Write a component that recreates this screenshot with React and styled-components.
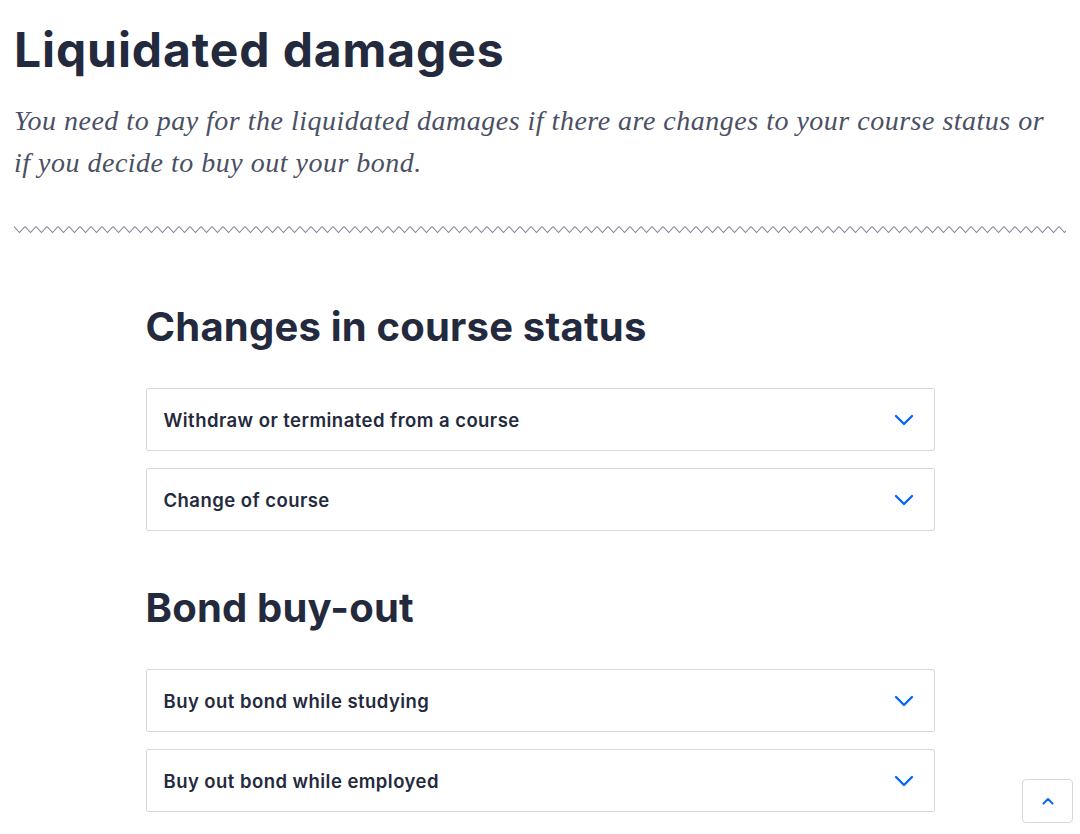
import React from 'react'
import styled, { createGlobalStyle } from 'styled-components'

const colors = {
  heading: '#242a3d',
  lead: '#4b5064',
  border: '#d7d8de',
  zigzag: '#7d8194',
  blue: '#0a66f5',
}

const sections = [
  {
    id: 'course',
    title: 'Changes in course status',
    items: ['Withdraw or terminated from a course', 'Change of course'],
  },
  {
    id: 'bond',
    title: 'Bond buy-out',
    items: ['Buy out bond while studying', 'Buy out bond while employed'],
  },
]

const GlobalStyle = createGlobalStyle`
  html, body {
    margin: 0;
    padding: 0;
    background: #ffffff;
  }
  body {
    font-family: Inter, "Noto Sans", sans-serif;
    color: ${colors.heading};
  }
  * { box-sizing: border-box; }
`

function Chevron() {
  return (
    <svg width="20" height="12" viewBox="0 0 20 12" fill="none">
      <path
        d="M2 2 L10 10 L18 2"
        stroke={colors.blue}
        strokeWidth="2.4"
        strokeLinecap="round"
        strokeLinejoin="round"
      />
    </svg>
  )
}

function App() {
  return (
    <>
      <GlobalStyle />
      <Page>
        <Header>
          <PageTitle>Liquidated damages</PageTitle>
          <Lead>
            You need to pay for the liquidated damages if there are changes to your course status or
            if you decide to buy out your bond.
          </Lead>
        </Header>
        <Zigzag>
          <svg width="100%" height="10">
            <defs>
              <pattern id="zz" width="11" height="10" patternUnits="userSpaceOnUse">
                <path d="M0 1.5 L5.5 7.5 L11 1.5" fill="none" stroke={colors.zigzag} strokeWidth="1.1" />
              </pattern>
            </defs>
            <rect width="100%" height="10" fill="url(#zz)" />
          </svg>
        </Zigzag>
        <Content>
          {sections.map((section) => (
            <Section key={section.id}>
              <SectionTitle>{section.title}</SectionTitle>
              <AccordionList>
                {section.items.map((item) => (
                  <AccordionItem key={item}>
                    <AccordionLabel>{item}</AccordionLabel>
                    <Chevron />
                  </AccordionItem>
                ))}
              </AccordionList>
            </Section>
          ))}
        </Content>
      </Page>
      <BackToTop aria-label="Back to top">
        <svg width="12" height="8" viewBox="0 0 12 8" fill="none">
          <path d="M1.5 6.5 L6 2 L10.5 6.5" stroke={colors.blue} strokeWidth="2" strokeLinecap="round" strokeLinejoin="round" />
        </svg>
      </BackToTop>
    </>
  )
}

export default App

const Page = styled.div`
  padding: 0 14px 40px;
`

const Header = styled.header`
  padding-top: 21px;
`

const PageTitle = styled.h1`
  margin: 0;
  font-size: 48px;
  line-height: 58px;
  font-weight: 700;
  letter-spacing: 0.9px;
  color: ${colors.heading};
`

const Lead = styled.p`
  margin: 21px 0 0;
  font-family: "Liberation Serif", "DejaVu Serif", serif;
  font-style: italic;
  font-size: 28px;
  line-height: 42px;
  letter-spacing: 0.5px;
  color: ${colors.lead};
`

const Zigzag = styled.div`
  margin-top: 41px;
  height: 10px;
  svg { display: block; }
`

const Content = styled.main`
  width: 789px;
  margin: 0 auto;
  padding-top: 68px;
  display: flex;
  flex-direction: column;
  gap: 53px;
`

const Section = styled.section`
  display: flex;
  flex-direction: column;
  gap: 37px;
`

const SectionTitle = styled.h2`
  margin: 0;
  font-size: 40px;
  line-height: 48px;
  font-weight: 700;
  letter-spacing: 0.2px;
  color: ${colors.heading};
`

const AccordionList = styled.div`
  display: flex;
  flex-direction: column;
  gap: 17px;
`

const AccordionItem = styled.button`
  display: flex;
  align-items: center;
  justify-content: space-between;
  height: 63px;
  padding: 0 20px 0 17px;
  background: #ffffff;
  border: 1px solid ${colors.border};
  border-radius: 2px;
  cursor: pointer;
  text-align: left;
`

const AccordionLabel = styled.span`
  font-family: Inter, "Noto Sans", sans-serif;
  font-size: 18.5px;
  font-weight: 600;
  letter-spacing: 0.45px;
  color: ${colors.heading};
`

const BackToTop = styled.button`
  position: fixed;
  right: 7px;
  bottom: 11px;
  width: 51px;
  height: 44px;
  display: flex;
  align-items: center;
  justify-content: center;
  background: #ffffff;
  border: 1px solid ${colors.border};
  border-radius: 4px;
  cursor: pointer;
`
